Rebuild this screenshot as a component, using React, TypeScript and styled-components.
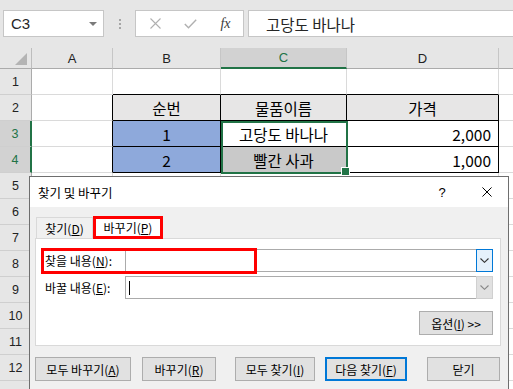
import styled, { createGlobalStyle } from 'styled-components';

const KR = `"Noto Sans CJK KR", "Noto Sans", sans-serif`;
const UI = `"Liberation Sans", Arial, sans-serif`;

const HEAD = '#e7e6e6';
const BLUE = '#8ea9db';
const GRAY = '#c9c9c9';
const GREEN = '#217346';

const GlobalStyle = createGlobalStyle`
  html, body {
    margin: 0;
    padding: 0;
    background: #e6e6e6;
    overflow: hidden;
  }
  * {
    box-sizing: border-box;
  }
`;

const Screen = styled.div`
  position: relative;
  width: 513px;
  height: 389px;
  overflow: hidden;
  background: #e6e6e6;
  font-family: ${KR};
`;

/* ---------- formula bar ---------- */

const FormulaBar = styled.div`
  height: 48px;
  display: flex;
  align-items: flex-start;
  padding: 10px 0 0 3px;
`;

const NameBox = styled.div`
  width: 101px;
  height: 27px;
  background: #fff;
  border: 1px solid #c6c6c6;
  display: flex;
  align-items: center;
  justify-content: space-between;
  padding: 0 6px 0 7px;
  font: 15px ${UI};
  color: #262626;
`;

const DropTriangle = styled.span`
  width: 0;
  height: 0;
  border-left: 4px solid transparent;
  border-right: 4px solid transparent;
  border-top: 4px solid #7a7a7a;
`;

const Grip = styled.div`
  width: 31px;
  height: 27px;
  display: flex;
  flex-direction: column;
  align-items: center;
  justify-content: center;
  gap: 2px;

  span {
    width: 2px;
    height: 2px;
    background: #a6a6a6;
  }
`;

const FxBox = styled.div`
  width: 109px;
  height: 27px;
  background: #fff;
  border: 1px solid #c6c6c6;
  display: flex;
  align-items: center;
  padding-left: 2px;
`;

const FxSlot = styled.span`
  width: 35px;
  display: flex;
  justify-content: center;
  align-items: center;
`;

const FxText = styled.span`
  font: italic 14px "Liberation Serif", serif;
  color: #3a3a3a;
`;

const FormulaInput = styled.div`
  flex: 1;
  margin-left: 4px;
  height: 27px;
  background: #fff;
  border-top: 1px solid #c6c6c6;
  border-bottom: 1px solid #c6c6c6;
  border-left: 1px solid #c6c6c6;
  display: flex;
  align-items: center;
  padding-left: 17px;
  font-size: 15.5px;
  color: #262626;
`;

/* ---------- sheet ---------- */

const Sheet = styled.div`
  display: grid;
  grid-template-columns: 32px 81px 108px 126px 152px 1fr;
  grid-template-rows: 21px;
  grid-auto-rows: 26px;
  background: #fff;
`;

const Corner = styled.div`
  background: #e6e6e6;
  border-right: 1px solid #bdbdbd;
  border-bottom: 1px solid #ababab;
  display: flex;
  align-items: flex-end;
  justify-content: flex-end;
  padding: 0 4px 3px 0;

  &::after {
    content: '';
    width: 0;
    height: 0;
    border-left: 12px solid transparent;
    border-bottom: 12px solid #b4b4b4;
  }
`;

const ColHeader = styled.div<{ $active?: boolean }>`
  background: ${(p) => (p.$active ? '#d2d2d2' : '#e6e6e6')};
  border-right: 1px solid #c6c6c6;
  border-bottom: ${(p) => (p.$active ? `2px solid ${GREEN}` : '1px solid #ababab')};
  display: flex;
  align-items: center;
  justify-content: center;
  font: 13px ${UI};
  color: ${(p) => (p.$active ? GREEN : '#222')};
`;

const RowHeader = styled.div<{ $active?: boolean }>`
  background: ${(p) => (p.$active ? '#d2d2d2' : '#e6e6e6')};
  border-right: ${(p) => (p.$active ? `2px solid ${GREEN}` : '1px solid #ababab')};
  border-bottom: 1px solid #cfcfcf;
  display: flex;
  align-items: center;
  justify-content: center;
  font: 12.5px ${UI};
  color: ${(p) => (p.$active ? GREEN : '#222')};
`;

const Cell = styled.div<{ $bg?: string; $right?: boolean; $rDark?: boolean; $bDark?: boolean }>`
  position: relative;
  display: flex;
  align-items: center;
  justify-content: ${(p) => (p.$right ? 'flex-end' : 'center')};
  padding: 0 7px;
  background: ${(p) => p.$bg ?? '#fff'};
  border-right: 1px solid ${(p) => (p.$rDark ? '#000' : '#dadada')};
  border-bottom: 1px solid ${(p) => (p.$bDark ? '#000' : '#dadada')};
  font-size: 15.5px;
  color: #000;
  white-space: nowrap;
`;

const Selection = styled.span`
  position: absolute;
  left: 0;
  top: 0;
  width: calc(100% + 2px);
  height: 53px;
  border: 2px solid ${GREEN};
  pointer-events: none;
  z-index: 2;

  &::after {
    content: '';
    position: absolute;
    right: -4px;
    bottom: -4px;
    width: 7px;
    height: 7px;
    background: ${GREEN};
    border: 1px solid #fff;
  }
`;

/* ---------- dialog ---------- */

const Dialog = styled.div`
  position: absolute;
  left: 29px;
  top: 176px;
  width: 480px;
  height: 230px;
  background: #f0f0f0;
  border: 1px solid #6e6e6e;
  display: flex;
  flex-direction: column;
  z-index: 5;
`;

const TitleBar = styled.div`
  height: 30px;
  background: #fff;
  display: flex;
  align-items: center;
  padding: 0 11px 0 8px;
  font-size: 12.5px;
  color: #000;
`;

const Title = styled.span`
  flex: 1;
`;

const TitleButton = styled.span<{ $gap?: number }>`
  width: 20px;
  margin-left: ${(p) => p.$gap ?? 0}px;
  display: flex;
  justify-content: center;
  align-items: center;
  font: 13px ${UI};
`;

const Body = styled.div`
  padding: 9px 7px 0 5px;
`;

const TabRow = styled.div`
  height: 22px;
  display: flex;
  align-items: flex-end;
  padding-left: 1px;
`;

const Tab = styled.div<{ $active?: boolean }>`
  position: relative;
  z-index: 1;
  width: ${(p) => (p.$active ? 70 : 57)}px;
  height: ${(p) => (p.$active ? 23 : 21)}px;
  margin-bottom: ${(p) => (p.$active ? -1 : 0)}px;
  background: ${(p) => (p.$active ? '#fff' : '#f0f0f0')};
  border: ${(p) => (p.$active ? '3px solid #ff0000' : '1px solid #d9d9d9')};
  border-bottom: ${(p) => (p.$active ? '3px solid #ff0000' : 'none')};
  display: flex;
  align-items: center;
  justify-content: center;
  font-size: 12px;
  color: #000;
`;

const Panel = styled.div`
  height: 108px;
  background: #fff;
  border: 1px solid #d9d9d9;
  padding: 10px 7px 0 9px;
`;

const FieldRow = styled.div<{ $top?: number }>`
  position: relative;
  height: 23px;
  margin-top: ${(p) => p.$top ?? 0}px;
  display: flex;
  align-items: center;
`;

const FieldLabel = styled.span`
  width: 80px;
  font-size: 12px;
  color: #000;
  white-space: nowrap;
`;

const ComboBox = styled.div`
  flex: 1;
  height: 23px;
  border: 1px solid #ababab;
  display: flex;
  align-items: stretch;
  background: #fff;
`;

const ComboText = styled.div`
  flex: 1;
  display: flex;
  align-items: center;
  padding-left: 3px;
`;

const Caret = styled.span`
  width: 1px;
  height: 14px;
  background: #000;
`;

const ComboArrow = styled.div<{ $focused?: boolean }>`
  width: 17px;
  display: flex;
  align-items: center;
  justify-content: center;
  background: ${(p) => (p.$focused ? '#e5f1fb' : '#e1e1e1')};
  border: 1px solid ${(p) => (p.$focused ? '#0078d7' : '#d0d0d0')};
  margin: -1px -1px -1px 0;
`;

const Highlight = styled.span`
  position: absolute;
  left: -4px;
  top: -1px;
  width: 216px;
  height: 26px;
  border: 3px solid #ff0000;
  pointer-events: none;
`;

const OptionsRow = styled.div`
  margin-top: 12px;
  display: flex;
  justify-content: flex-end;
`;

const Button = styled.button<{ $w: number; $gap?: number; $default?: boolean }>`
  width: ${(p) => p.$w}px;
  height: 24px;
  margin-left: ${(p) => p.$gap ?? 0}px;
  padding: 0;
  background: #e1e1e1;
  border: ${(p) => (p.$default ? '2px solid #0078d7' : '1px solid #adadad')};
  font-family: ${KR};
  font-size: 12px;
  color: #000;
  display: flex;
  align-items: center;
  justify-content: center;
  white-space: nowrap;
`;

const ButtonRow = styled.div`
  margin-top: 11px;
  display: flex;
`;

/* ---------- icons ---------- */

const CrossIcon = ({ size = 11, color = '#000' }: { size?: number; color?: string }) => (
  <svg width={size} height={size} viewBox="0 0 11 11">
    <path d="M0.5 0.5 L10.5 10.5 M10.5 0.5 L0.5 10.5" stroke={color} strokeWidth="1.1" fill="none" />
  </svg>
);

const CheckIcon = () => (
  <svg width="13" height="10" viewBox="0 0 13 10">
    <path d="M0.8 5 L4.5 8.8 L12.2 0.8" stroke="#b0b0b0" strokeWidth="1.4" fill="none" />
  </svg>
);

const Chevron = ({ color }: { color: string }) => (
  <svg width="9" height="5" viewBox="0 0 9 5">
    <path d="M0.5 0.5 L4.5 4.3 L8.5 0.5" stroke={color} strokeWidth="1.1" fill="none" />
  </svg>
);

/* ---------- data ---------- */

interface CellData {
  text?: string;
  bg?: string;
  right?: boolean;
  r?: boolean;
  b?: boolean;
  sel?: boolean;
}

const columns = ['A', 'B', 'C', 'D', ''];

const tableRows: CellData[][] = [
  [{}, { b: true }, { b: true }, { b: true }, {}],
  [
    { r: true },
    { text: '순번', bg: HEAD, r: true, b: true },
    { text: '물품이름', bg: HEAD, r: true, b: true },
    { text: '가격', bg: HEAD, r: true, b: true },
    {},
  ],
  [
    { r: true },
    { text: '1', bg: BLUE, r: true, b: true },
    { text: '고당도 바나나', r: true, b: true, sel: true },
    { text: '2,000', right: true, r: true, b: true },
    {},
  ],
  [
    { r: true },
    { text: '2', bg: BLUE, r: true, b: true },
    { text: '빨간 사과', bg: GRAY, r: true, b: true },
    { text: '1,000', right: true, r: true, b: true },
    {},
  ],
];

const rows: CellData[][] = [
  ...tableRows,
  ...Array.from({ length: 9 }, () => [{}, {}, {}, {}, {}]),
];

export default function App() {
  return (
    <Screen>
      <GlobalStyle />
      <FormulaBar>
        <NameBox>
          C3
          <DropTriangle />
        </NameBox>
        <Grip>
          <span />
          <span />
          <span />
        </Grip>
        <FxBox>
          <FxSlot>
            <CrossIcon color="#b0b0b0" />
          </FxSlot>
          <FxSlot>
            <CheckIcon />
          </FxSlot>
          <FxSlot>
            <FxText>fx</FxText>
          </FxSlot>
        </FxBox>
        <FormulaInput>고당도 바나나</FormulaInput>
      </FormulaBar>

      <Sheet>
        <Corner />
        {columns.map((c, i) => (
          <ColHeader key={i} $active={c === 'C'}>
            {c}
          </ColHeader>
        ))}
        {rows.map((row, ri) => [
          <RowHeader key={`h${ri}`} $active={ri === 2 || ri === 3}>
            {ri + 1}
          </RowHeader>,
          ...row.map((cell, ci) => (
            <Cell key={`${ri}-${ci}`} $bg={cell.bg} $right={cell.right} $rDark={cell.r} $bDark={cell.b}>
              {cell.text}
              {cell.sel && <Selection />}
            </Cell>
          )),
        ])}
      </Sheet>

      <Dialog>
        <TitleBar>
          <Title>찾기 및 바꾸기</Title>
          <TitleButton>?</TitleButton>
          <TitleButton $gap={25}>
            <CrossIcon size={10} />
          </TitleButton>
        </TitleBar>
        <Body>
          <TabRow>
            <Tab>
              찾기(<u>D</u>)
            </Tab>
            <Tab $active>
              바꾸기(<u>P</u>)
            </Tab>
          </TabRow>
          <Panel>
            <FieldRow>
              <FieldLabel>
                찾을 내용(<u>N</u>):
              </FieldLabel>
              <ComboBox>
                <ComboText />
                <ComboArrow $focused>
                  <Chevron color="#333" />
                </ComboArrow>
              </ComboBox>
              <Highlight />
            </FieldRow>
            <FieldRow $top={4}>
              <FieldLabel>
                바꿀 내용(<u>E</u>):
              </FieldLabel>
              <ComboBox>
                <ComboText>
                  <Caret />
                </ComboText>
                <ComboArrow>
                  <Chevron color="#888" />
                </ComboArrow>
              </ComboBox>
            </FieldRow>
            <OptionsRow>
              <Button $w={74}>
                옵션(<u>I</u>) &gt;&gt;
              </Button>
            </OptionsRow>
          </Panel>
          <ButtonRow>
            <Button $w={96}>
              모두 바꾸기(<u>A</u>)
            </Button>
            <Button $w={74} $gap={11}>
              바꾸기(<u>R</u>)
            </Button>
            <Button $w={80} $gap={19}>
              모두 찾기(<u>I</u>)
            </Button>
            <Button $w={82} $gap={10} $default>
              다음 찾기(<u>F</u>)
            </Button>
            <Button $w={73} $gap={20}>
              닫기
            </Button>
          </ButtonRow>
        </Body>
      </Dialog>
    </Screen>
  );
}
